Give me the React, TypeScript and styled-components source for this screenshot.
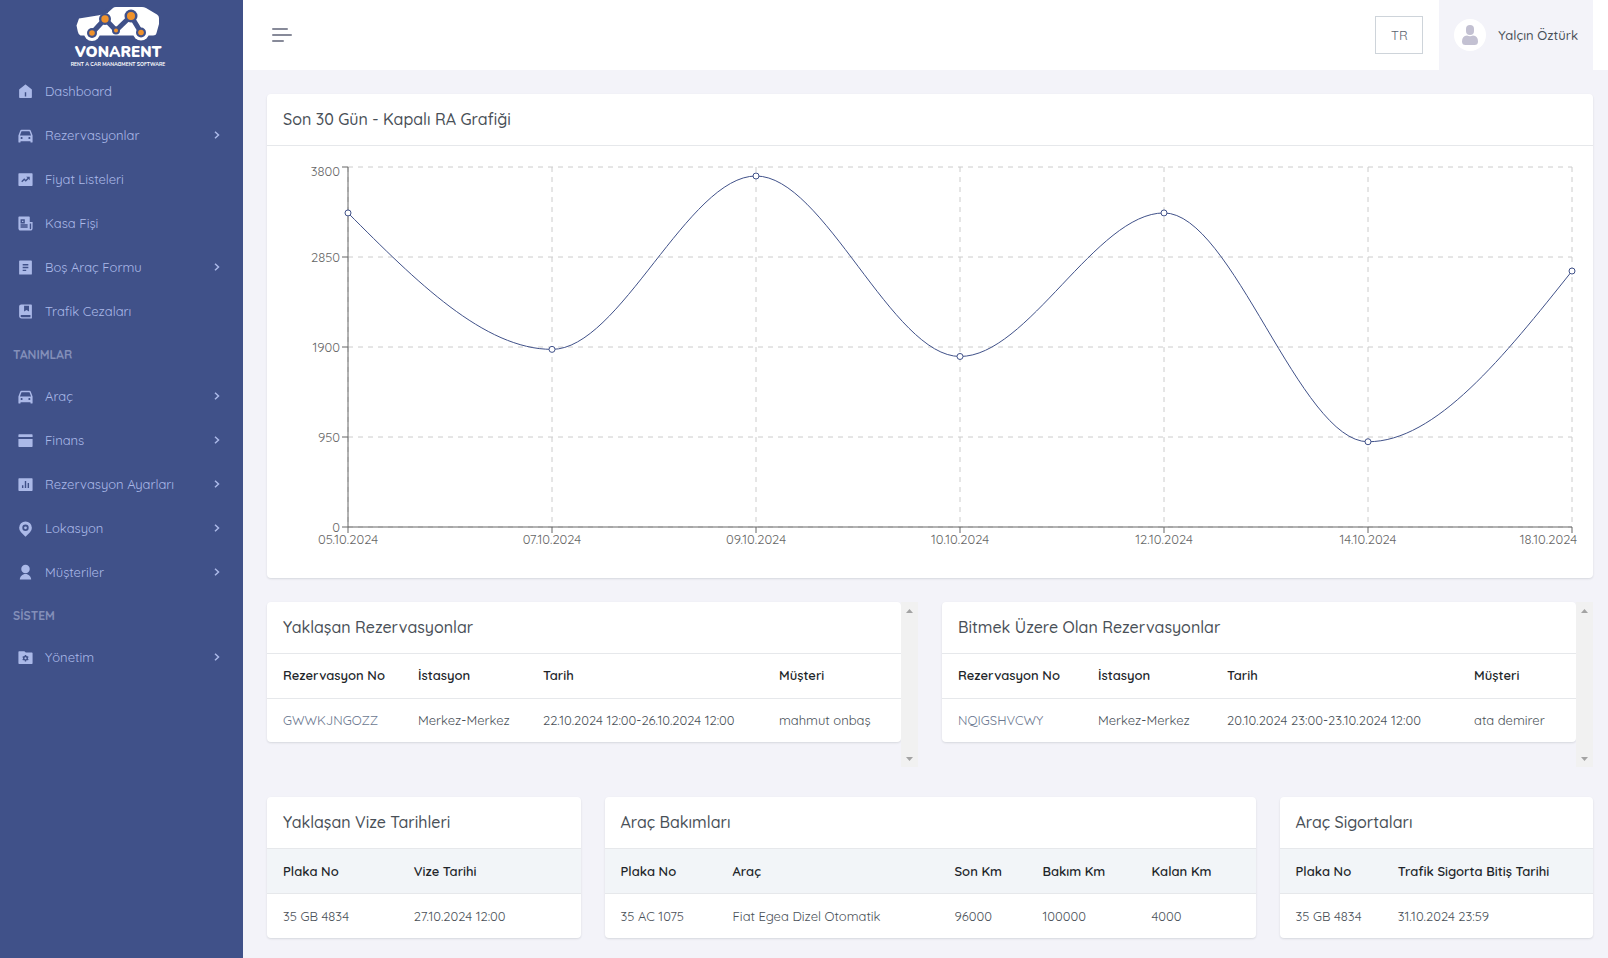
import React from "react";
import styled, { createGlobalStyle } from "styled-components";
import {
  RiHome5Fill,
  RiCarFill,
  RiFundsBoxFill,
  RiNewspaperFill,
  RiFileList2Fill,
  RiBookMarkedFill,
  RiBarChartBoxFill,
  RiUserFill,
  RiFolderSettingsFill,
} from "react-icons/ri";

const color = {
  sidebar: "#405189",
  sidebarText: "#abb9e8",
  sidebarTitle: "#838fb9",
  page: "#f3f3f9",
  line: "#e6e8eb",
  heading: "#495057",
  body: "#495057",
  strong: "#212529",
  link: "#6b7890",
  thead: "#f2f5f8",
};

const GlobalStyle = createGlobalStyle`
  *, *::before, *::after { box-sizing: border-box; }
  body {
    margin: 0;
    background: ${color.page};
    color: ${color.body};
    font-family: Quicksand, Lato, "Liberation Sans", sans-serif;
    font-size: 13px;
    line-height: 20px;
  }
`;

/* ---------- layout ---------- */

const Page = styled.div`
  display: flex;
  min-height: 100vh;
`;

const Content = styled.div`
  flex: 1;
  min-width: 0;
`;

const Main = styled.main`
  display: grid;
  grid-template-columns: repeat(12, minmax(0, 1fr));
  column-gap: 24px;
  padding: 24px 15px 20px 24px;
`;

const Cell = styled.div<{ $span: number; $below?: number }>`
  grid-column: span ${(p) => p.$span};
  margin-bottom: ${(p) => p.$below ?? 0}px;
`;

/* ---------- sidebar ---------- */

const Sidebar = styled.aside`
  flex: 0 0 243px;
  background: ${color.sidebar};
`;

const Brand = styled.a`
  display: flex;
  justify-content: center;
  height: 69px;
  padding: 4px 7px 0 0;
`;

const MenuTitle = styled.h2`
  margin: 0;
  padding: 12px 13px 9px;
  color: ${color.sidebarTitle};
  font-size: 12px;
  font-weight: 700;
  line-height: 20px;
`;

const MenuList = styled.ul`
  margin: 0;
  padding: 0;
  list-style: none;
`;

const MenuLink = styled.a`
  display: flex;
  align-items: center;
  height: 44px;
  padding: 0 23px 0 17px;
  color: ${color.sidebarText};
  text-decoration: none;
`;

const MenuIcon = styled.span`
  display: flex;
  width: 28px;
  font-size: 17px;
`;

const MenuText = styled.span`
  flex: 1;
`;

/* ---------- top bar ---------- */

const TopBar = styled.header`
  display: flex;
  align-items: center;
  height: 70px;
  padding: 0 15px 0 29px;
  background: #fff;
`;

const MenuToggle = styled.button`
  display: flex;
  flex-direction: column;
  gap: 4px;
  margin-right: auto;
  padding: 0;
  border: 0;
  background: none;
`;

const ToggleBar = styled.span<{ $width: number }>`
  width: ${(p) => p.$width}px;
  height: 2px;
  border-radius: 1px;
  background: #878a99;
`;

const LanguageButton = styled.button`
  width: 48px;
  height: 38px;
  margin-right: 16px;
  padding: 0;
  border: 1px solid #ced4da;
  background: #fff;
  color: #5b6470;
  font: inherit;
`;

const UserButton = styled.button`
  display: flex;
  align-items: center;
  gap: 12px;
  height: 70px;
  padding: 0 15px;
  border: 0;
  background: ${color.page};
  color: ${color.heading};
  font: inherit;
  font-weight: 500;
`;

/* ---------- cards and tables ---------- */

const Card = styled.section`
  overflow: hidden;
  border-radius: 4px;
  background: #fff;
  box-shadow: 0 1px 2px rgba(56, 65, 74, 0.15);
`;

const CardTitle = styled.h3`
  margin: 0;
  padding: 13px 16px 14px;
  border-bottom: 1px solid ${color.line};
  color: ${color.heading};
  font-size: 16px;
  font-weight: 500;
  line-height: 24px;
`;

const Table = styled.table`
  width: 100%;
  border-collapse: separate;
  border-spacing: 0;
  table-layout: fixed;
`;

const HeadCell = styled.th<{ $share: number; $shaded?: boolean }>`
  width: ${(p) => p.$share}%;
  height: 45px;
  padding: 0 0 ${(p) => (p.$shaded ? 0 : 2)}px 16px;
  border-bottom: 1px solid ${color.line};
  background: ${(p) => (p.$shaded ? color.thead : "#fff")};
  color: ${color.strong};
  font-weight: 600;
  text-align: left;
  white-space: nowrap;
`;

const DataCell = styled.td<{ $tall?: boolean }>`
  height: ${(p) => (p.$tall ? 44 : 43)}px;
  padding: 0 0 1px 16px;
  white-space: nowrap;
`;

const RecordLink = styled.a`
  color: ${color.link};
  text-decoration: none;
`;

const ScrollPanel = styled.div`
  display: grid;
  grid-template-columns: minmax(0, 1fr) 17px;
  align-items: start;
  min-height: 165px;
`;

const ScrollTrack = styled.div`
  display: flex;
  flex-direction: column;
  justify-content: space-between;
  align-self: stretch;
  background: #f1f1f1;
`;

const ScrollButton = styled.button`
  display: flex;
  align-items: center;
  justify-content: center;
  height: 17px;
  padding: 0;
  border: 0;
  background: none;
`;

const ChartSvg = styled.svg`
  display: block;
  width: 100%;
  height: auto;
`;

const Tick = styled.text`
  fill: #666;
  font-size: 13px;
`;

/* ---------- drawings ---------- */

function Logo() {
  const nodes = [
    { x: 92, y: 33, r: 2.8, ring: 5 },
    { x: 105, y: 19, r: 3.7, ring: 6 },
    { x: 116, y: 30.5, r: 2, ring: 4 },
    { x: 131, y: 16, r: 4, ring: 6.5 },
    { x: 141, y: 32.5, r: 2.8, ring: 5 },
  ];
  return (
    <svg width="100" height="64" viewBox="68 4 100 64" role="img" aria-label="Vonarent">
      <path
        d="M79 18.5 99 15.2 108 12.5 113 8Q114 7 116 7H142Q144 7 146 8L157 14.5Q159 15.5 159 18V24L156.500 33Q156 35.500 153 35.500H80.500Q78.500 35 77.800 31.500L76.500 25.500Z"
        fill="#fff"
      />
      <circle cx="92" cy="33" r="8" fill="#fff" />
      <circle cx="141" cy="32.5" r="8" fill="#fff" />
      <path d="M99 15 108 8V13Z" fill={color.sidebar} />
      <path
        d="M92 33 105 19 116 30.500 131 16 141 32.500"
        fill="none"
        stroke={color.sidebar}
        strokeWidth="5"
      />
      {nodes.map((n) => (
        <g key={n.x}>
          <circle cx={n.x} cy={n.y} r={n.ring} fill={color.sidebar} />
          <circle cx={n.x} cy={n.y} r={n.r} fill="#f0922b" />
        </g>
      ))}
      <g fill="#fff" textAnchor="middle" fontFamily="Nunito, Quicksand, Inter, sans-serif">
        <text x="118" y="57" fontSize="15" fontWeight="900">VONARENT</text>
        <text x="118" y="66" fontSize="5" fontWeight="700">RENT A CAR MANAGMENT SOFTWARE</text>
      </g>
    </svg>
  );
}

function CardIcon() {
  return (
    <svg width="1em" height="1em" viewBox="0 0 24 24" fill="currentColor" aria-hidden="true">
      <path d="M3 3H21Q22 3 22 4V7H2V4Q2 3 3 3ZM2 10H22V20Q22 21 21 21H3Q2 21 2 20Z" />
    </svg>
  );
}

function PinIcon() {
  return (
    <svg width="1em" height="1em" viewBox="0 0 24 24" fill="currentColor" fillRule="evenodd" aria-hidden="true">
      <path d="M18.364 17.364 12 23.728l-6.364-6.364a9 9 0 1 1 12.728 0ZM12 15.500a4.500 4.500 0 1 0 0-9 4.500 4.500 0 0 0 0 9Zm0-2.500a2 2 0 1 1 0-4 2 2 0 0 1 0 4Z" />
    </svg>
  );
}

function Chevron() {
  return (
    <svg width="6" height="8" viewBox="0 0 6 8" fill="none" stroke="currentColor" strokeWidth="1.5" aria-hidden="true">
      <path d="M1 0.700 4.500 4 1 7.300" />
    </svg>
  );
}

function Avatar() {
  return (
    <svg width="32" height="32" viewBox="0 0 32 32" aria-hidden="true">
      <circle cx="16" cy="16" r="16" fill="#fff" />
      <rect x="12" y="6" width="8" height="10" rx="4" fill="#c3c1d2" />
      <path d="M8 22.500Q8 17 13 16.500Q16 18 19 16.500Q24 17 24 22.500Q24 26 20.500 26H11.500Q8 26 8 22.500Z" fill="#c3c1d2" />
    </svg>
  );
}

function ScrollBar() {
  return (
    <ScrollTrack>
      <ScrollButton aria-label="Yukarı kaydır">
        <svg width="7" height="4" viewBox="0 0 7 4"><path d="M0 4 3.500 0 7 4Z" fill="#a3a3a3" /></svg>
      </ScrollButton>
      <ScrollButton aria-label="Aşağı kaydır">
        <svg width="7" height="4" viewBox="0 0 7 4"><path d="M0 0 3.500 4 7 0Z" fill="#a3a3a3" /></svg>
      </ScrollButton>
    </ScrollTrack>
  );
}

/* ---------- chart ---------- */

const series = [
  { day: "05.10.2024", value: 3315 },
  { day: "07.10.2024", value: 1875 },
  { day: "09.10.2024", value: 3705 },
  { day: "10.10.2024", value: 1800 },
  { day: "12.10.2024", value: 3315 },
  { day: "14.10.2024", value: 900 },
  { day: "18.10.2024", value: 2702 },
];
const plot = { left: 81, right: 1305, top: 21, bottom: 381, max: 3800 };
const levels = [0, 950, 1900, 2850, 3800];

const xAt = (i: number) => plot.left + (i * (plot.right - plot.left)) / (series.length - 1);
const yAt = (v: number) => plot.bottom - (v / plot.max) * (plot.bottom - plot.top);

/* Monotone cubic: every inner point is a peak or a dip, so its tangent is flat. */
function curvePath() {
  const last = series.length - 1;
  return series.slice(1).reduce((d, point, i) => {
    const x0 = xAt(i);
    const x1 = xAt(i + 1);
    const y0 = yAt(series[i].value);
    const y1 = yAt(point.value);
    const third = (x1 - x0) / 3;
    const c0 = i === 0 ? y0 + (y1 - y0) / 2 : y0;
    const c1 = i + 1 === last ? y1 - (y1 - y0) / 2 : y1;
    return `${d} C${x0 + third} ${c0} ${x1 - third} ${c1} ${x1} ${y1}`;
  }, `M${xAt(0)} ${yAt(series[0].value)}`);
}

function Chart() {
  return (
    <ChartSvg viewBox="0 0 1326 432" role="img" aria-label="Son 30 Gün - Kapalı RA Grafiği">
      <g stroke="#ccc" strokeDasharray="5 5">
        {levels.map((v) => (
          <line key={v} x1={plot.left} x2={plot.right} y1={yAt(v)} y2={yAt(v)} />
        ))}
        {series.map((p, i) => (
          <line key={p.day} x1={xAt(i)} x2={xAt(i)} y1={plot.top} y2={plot.bottom} />
        ))}
      </g>
      <g stroke="#666">
        <line x1={plot.left} x2={plot.left} y1={plot.top} y2={plot.bottom} />
        <line x1={plot.left} x2={plot.right} y1={plot.bottom} y2={plot.bottom} />
        {levels.map((v) => (
          <line key={v} x1={plot.left - 6} x2={plot.left} y1={yAt(v)} y2={yAt(v)} />
        ))}
        {series.map((p, i) => (
          <line key={p.day} x1={xAt(i)} x2={xAt(i)} y1={plot.bottom} y2={plot.bottom + 6} />
        ))}
      </g>
      {levels.map((v) => (
        <Tick key={v} x={plot.left - 8} y={v === plot.max ? yAt(v) + 9 : yAt(v) + 5} textAnchor="end">
          {v}
        </Tick>
      ))}
      {series.map((p, i) =>
        i === series.length - 1 ? (
          <Tick key={p.day} x={xAt(i) + 5} y={plot.bottom + 17} textAnchor="end">{p.day}</Tick>
        ) : (
          <Tick key={p.day} x={xAt(i)} y={plot.bottom + 17} textAnchor="middle">{p.day}</Tick>
        )
      )}
      <path d={curvePath()} fill="none" stroke={color.sidebar} />
      {series.map((p, i) => (
        <circle key={p.day} cx={xAt(i)} cy={yAt(p.value)} r="3" fill="#fff" stroke={color.sidebar} />
      ))}
    </ChartSvg>
  );
}

/* ---------- menu ---------- */

type Item = { text: string; icon: React.ComponentType; nested?: boolean };
const menu: { title?: string; items: Item[] }[] = [
  {
    items: [
      { text: "Dashboard", icon: RiHome5Fill },
      { text: "Rezervasyonlar", icon: RiCarFill, nested: true },
      { text: "Fiyat Listeleri", icon: RiFundsBoxFill },
      { text: "Kasa Fişi", icon: RiNewspaperFill },
      { text: "Boş Araç Formu", icon: RiFileList2Fill, nested: true },
      { text: "Trafik Cezaları", icon: RiBookMarkedFill },
    ],
  },
  {
    title: "TANIMLAR",
    items: [
      { text: "Araç", icon: RiCarFill, nested: true },
      { text: "Finans", icon: CardIcon, nested: true },
      { text: "Rezervasyon Ayarları", icon: RiBarChartBoxFill, nested: true },
      { text: "Lokasyon", icon: PinIcon, nested: true },
      { text: "Müşteriler", icon: RiUserFill, nested: true },
    ],
  },
  { title: "SİSTEM", items: [{ text: "Yönetim", icon: RiFolderSettingsFill, nested: true }] },
];

function Navigation() {
  return (
    <nav>
      {menu.map((group, i) => (
        <React.Fragment key={i}>
          {group.title && <MenuTitle>{group.title}</MenuTitle>}
          <MenuList>
            {group.items.map(({ text, icon: Icon, nested }) => (
              <li key={text}>
                <MenuLink href="#">
                  <MenuIcon><Icon /></MenuIcon>
                  <MenuText>{text}</MenuText>
                  {nested && <Chevron />}
                </MenuLink>
              </li>
            ))}
          </MenuList>
        </React.Fragment>
      ))}
    </nav>
  );
}

/* ---------- data cards ---------- */

type Column = { name: string; weight: number };
type TableProps = {
  title: string;
  columns: Column[];
  row: string[];
  shaded?: boolean;
  linked?: boolean;
};

function TableCard({ title, columns, row, shaded, linked }: TableProps) {
  const total = columns.reduce((sum, c) => sum + c.weight, 0);
  return (
    <Card>
      <CardTitle>{title}</CardTitle>
      <Table>
        <thead>
          <tr>
            {columns.map((c) => (
              <HeadCell key={c.name} scope="col" $share={(c.weight / total) * 100} $shaded={shaded}>
                {c.name}
              </HeadCell>
            ))}
          </tr>
        </thead>
        <tbody>
          <tr>
            {row.map((value, i) => (
              <DataCell key={i} $tall={shaded}>
                {linked && i === 0 ? <RecordLink href="#">{value}</RecordLink> : value}
              </DataCell>
            ))}
          </tr>
        </tbody>
      </Table>
    </Card>
  );
}

const columnsOf = (...pairs: [string, number][]): Column[] =>
  pairs.map(([name, weight]) => ({ name, weight }));

export default function App() {
  return (
    <>
      <GlobalStyle />
      <Page>
        <Sidebar>
          <Brand href="#"><Logo /></Brand>
          <Navigation />
        </Sidebar>
        <Content>
          <TopBar>
            <MenuToggle aria-label="Menü">
              <ToggleBar $width={16} />
              <ToggleBar $width={20} />
              <ToggleBar $width={12} />
            </MenuToggle>
            <LanguageButton>TR</LanguageButton>
            <UserButton>
              <Avatar />
              Yalçın Öztürk
            </UserButton>
          </TopBar>
          <Main>
            <Cell $span={12} $below={24}>
              <Card>
                <CardTitle>Son 30 Gün - Kapalı RA Grafiği</CardTitle>
                <Chart />
              </Card>
            </Cell>
            <Cell $span={6} $below={30}>
              <ScrollPanel>
                <TableCard
                  linked
                  title="Yaklaşan Rezervasyonlar"
                  columns={columnsOf(["Rezervasyon No", 135], ["İstasyon", 125], ["Tarih", 236], ["Müşteri", 138])}
                  row={["GWWKJNGOZZ", "Merkez-Merkez", "22.10.2024 12:00-26.10.2024 12:00", "mahmut onbaş"]}
                />
                <ScrollBar />
              </ScrollPanel>
            </Cell>
            <Cell $span={6} $below={30}>
              <ScrollPanel>
                <TableCard
                  linked
                  title="Bitmek Üzere Olan Rezervasyonlar"
                  columns={columnsOf(["Rezervasyon No", 140], ["İstasyon", 129], ["Tarih", 247], ["Müşteri", 118])}
                  row={["NQIGSHVCWY", "Merkez-Merkez", "20.10.2024 23:00-23.10.2024 12:00", "ata demirer"]}
                />
                <ScrollBar />
              </ScrollPanel>
            </Cell>
            <Cell $span={3}>
              <TableCard
                shaded
                title="Yaklaşan Vize Tarihleri"
                columns={columnsOf(["Plaka No", 131], ["Vize Tarihi", 183])}
                row={["35 GB 4834", "27.10.2024 12:00"]}
              />
            </Cell>
            <Cell $span={6}>
              <TableCard
                shaded
                title="Araç Bakımları"
                columns={columnsOf(["Plaka No", 112], ["Araç", 222], ["Son Km", 88], ["Bakım Km", 109], ["Kalan Km", 120])}
                row={["35 AC 1075", "Fiat Egea Dizel Otomatik", "96000", "100000", "4000"]}
              />
            </Cell>
            <Cell $span={3}>
              <TableCard
                shaded
                title="Araç Sigortaları"
                columns={columnsOf(["Plaka No", 102], ["Trafik Sigorta Bitiş Tarihi", 211])}
                row={["35 GB 4834", "31.10.2024 23:59"]}
              />
            </Cell>
          </Main>
        </Content>
      </Page>
    </>
  );
}
